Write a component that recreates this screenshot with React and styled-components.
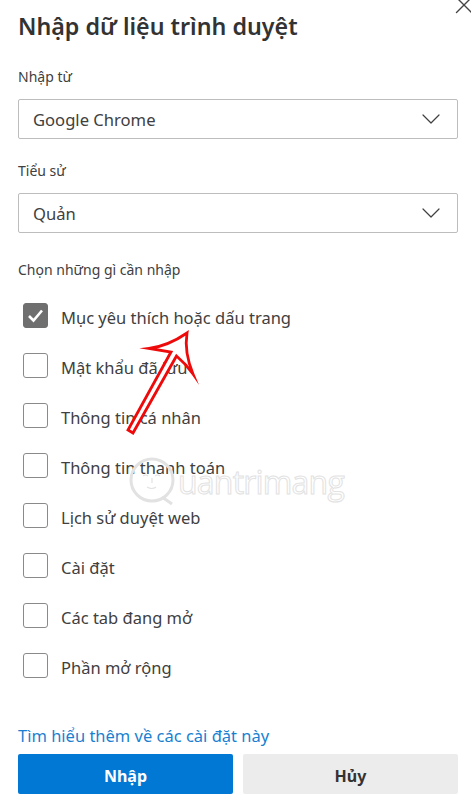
import React from 'react';
import styled, { createGlobalStyle } from 'styled-components';
import { ChevronDown, X } from 'lucide-react';

const GlobalStyle = createGlobalStyle`
    html, body {
        margin: 0;
        background: #fff;
    }
    * {
        box-sizing: border-box;
    }
`;

const Dialog = styled.div`
    position: relative;
    width: 471px;
    height: 800px;
    padding: 0 13px 0 18px;
    overflow: hidden;
    font-family: "Noto Sans", sans-serif;
    color: #404040;
`;

const CloseButton = styled.div`
    position: absolute;
    top: -10px;
    right: -8px;
    color: #444;
`;

const Title = styled.h1`
    margin: 0;
    padding-top: 9px;
    height: 66px;
    font-size: 23.25px;
    line-height: 34px;
    font-weight: 600;
    color: #333;
`;

const FieldLabel = styled.div`
    height: 21px;
    font-size: 14px;
    line-height: 21px;
    margin-bottom: ${(props) => props.$gap}px;
`;

const Select = styled.div`
    height: 40px;
    margin-bottom: ${(props) => props.$gap}px;
    padding: 0 10px 0 14px;
    display: flex;
    align-items: center;
    justify-content: space-between;
    border: 1px solid #bdbdbd;
    border-radius: 2px;
    font-size: 16.6px;
`;

const CheckList = styled.div`
    display: flex;
    flex-direction: column;
    gap: 25px;
    padding: 23px 0 0 5px;
`;

const CheckRow = styled.div`
    display: flex;
    align-items: center;
    gap: 13px;
    height: 25px;
    font-size: 16.5px;
`;

const RowLabel = styled.span`
    padding-top: 4px;
`;

const Box = styled.div`
    width: 25px;
    height: 25px;
    display: flex;
    align-items: center;
    justify-content: center;
    border: 1px solid ${(props) => (props.$checked ? '#6f6f6f' : '#8a8a8a')};
    border-radius: 3px;
    background: ${(props) => (props.$checked ? '#6f6f6f' : '#fff')};
`;

const LearnMore = styled.a`
    display: block;
    margin-top: 46px;
    height: 24px;
    font-size: 16.5px;
    line-height: 24px;
    color: #1a7fd0;
`;

const Buttons = styled.div`
    display: grid;
    grid-template-columns: 1fr 1fr;
    gap: 10px;
    margin-top: 6px;
`;

const Button = styled.div`
    height: 40px;
    padding-top: 4px;
    display: flex;
    align-items: center;
    justify-content: center;
    border-radius: 2px;
    font-size: 16px;
    font-weight: 700;
    background: ${(props) => (props.$primary ? '#0078d4' : '#ececec')};
    color: ${(props) => (props.$primary ? '#fff' : '#333')};
`;

const Arrow = styled.svg`
    position: absolute;
    left: 0;
    top: 0;
    pointer-events: none;
`;

const Watermark = styled.div`
    position: absolute;
    left: 128px;
    top: 456px;
    display: flex;
    align-items: center;
    pointer-events: none;
`;

const WatermarkText = styled.span`
    margin-left: 1px;
    font-family: "Open Sans", sans-serif;
    font-size: 32px;
    letter-spacing: -0.8px;
    color: transparent;
    -webkit-text-stroke: 1px #e2e2e2;
`;

const items = [
    'Mục yêu thích hoặc dấu trang',
    'Mật khẩu đã lưu',
    'Thông tin cá nhân',
    'Thông tin thanh toán',
    'Lịch sử duyệt web',
    'Cài đặt',
    'Các tab đang mở',
    'Phần mở rộng',
];

const App = () => {
    return (
        <Dialog>
            <GlobalStyle />
            <Watermark>
                <svg width="49" height="50" viewBox="0 0 49 50" fill="none" stroke="#e2e2e2">
                    <circle cx="24" cy="24" r="21" strokeWidth="3" />
                    <path d="M34 41l10 7" strokeWidth="3" />
                    <path d="M15 20q3-2 5 0M27 20q3-2 5 0M19 31q5 3 9 0M24 22v5" strokeWidth="1.2" />
                </svg>
                <WatermarkText>uantrimang</WatermarkText>
            </Watermark>
            <CloseButton>
                <X size={30} strokeWidth={1.1} />
            </CloseButton>
            <Title>Nhập dữ liệu trình duyệt</Title>
            <FieldLabel $gap={12}>Nhập từ</FieldLabel>
            <Select $gap={21}>
                Google Chrome
                <ChevronDown size={32} strokeWidth={0.9} />
            </Select>
            <FieldLabel $gap={12}>Tiểu sử</FieldLabel>
            <Select $gap={26}>
                Quản
                <ChevronDown size={32} strokeWidth={0.9} />
            </Select>
            <FieldLabel $gap={0}>Chọn những gì cần nhập</FieldLabel>
            <CheckList>
                {items.map((item, idx) => (
                    <CheckRow key={idx}>
                        <Box $checked={idx === 0}>
                            {idx === 0 && (
                                <svg width="17" height="15" viewBox="0 0 17 15">
                                    <path d="M2 8l4.5 4.5L15 2.5" fill="none" stroke="#fff" strokeWidth="2.6" />
                                </svg>
                            )}
                        </Box>
                        <RowLabel>{item}</RowLabel>
                    </CheckRow>
                ))}
            </CheckList>
            <LearnMore>Tìm hiểu thêm về các cài đặt này</LearnMore>
            <Buttons>
                <Button $primary>Nhập</Button>
                <Button>Hủy</Button>
            </Buttons>
            <Arrow width="471" height="800" viewBox="0 0 471 800">
                <path
                    d="M187 333 Q168 346 149 348.500 L171 352 L128 430 L133 433 L176.500 356 Q186 364 193 374 Q184 352 187 333 Z"
                    fill="#fff"
                    stroke="#ee0a0a"
                    strokeWidth="2.8"
                    strokeMiterlimit="12"
                />
            </Arrow>
        </Dialog>
    );
};

export default App;
